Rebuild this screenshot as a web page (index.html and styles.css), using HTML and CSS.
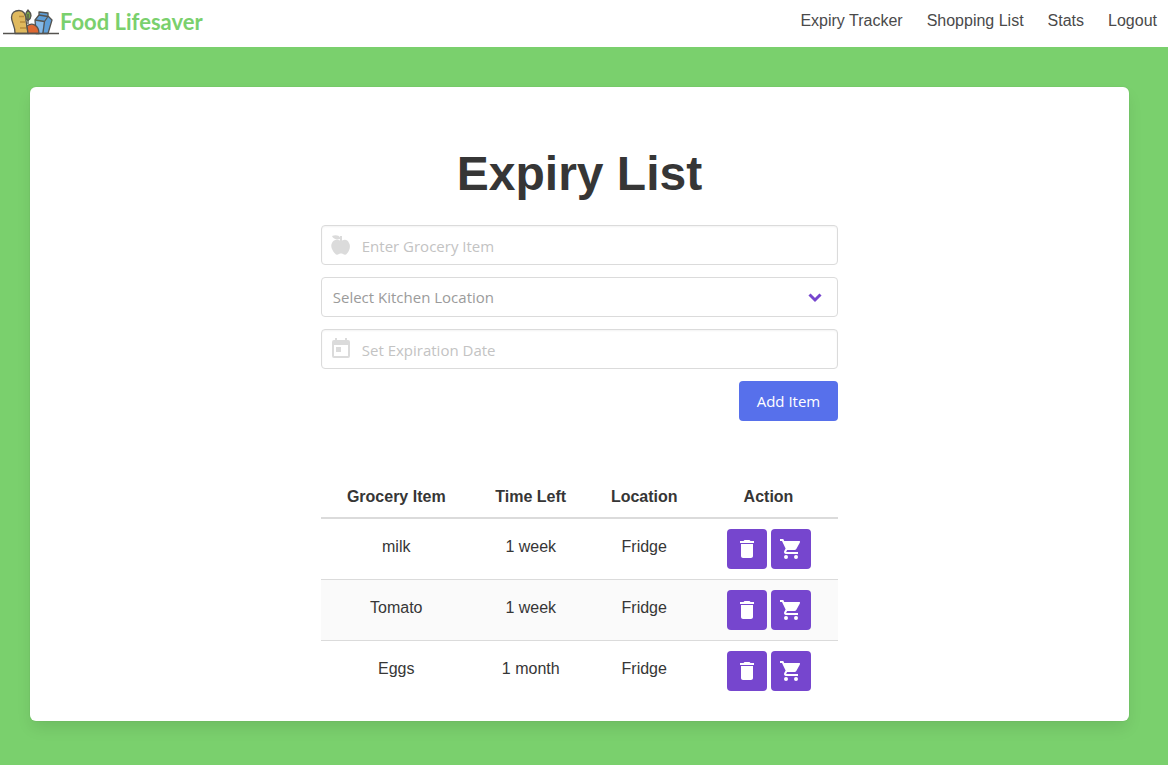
FILE: index.html
```html
<!DOCTYPE html>
<html lang="en">
<head>
<meta charset="utf-8">
<meta name="viewport" content="width=device-width, initial-scale=1">
<title>Food Lifesaver</title>
<link rel="stylesheet" href="styles.css">
</head>
<body>
<svg class="sprite" aria-hidden="true">
  <symbol id="trash" viewBox="0 0 24 24"><path d="M6 19c0 1.100.9 2 2 2h8c1.100 0 2-.9 2-2V7H6v12zM19 4h-3.500l-1-1h-5l-1 1H5v2h14V4z"/></symbol>
  <symbol id="cart" viewBox="0 0 24 24"><path d="M7 18a2 2 0 1 0 0 4 2 2 0 0 0 0-4zM1 2v2h2l3.600 7.590-1.350 2.450C4.520 15.370 5.480 17 7 17h12v-2H7.420a.25.25 0 0 1-.25-.25l.03-.12.9-1.630h7.450c.75 0 1.410-.41 1.750-1.030l3.580-6.490A1 1 0 0 0 20 4H5.210l-.94-2H1zm16 16a2 2 0 1 0 0 4 2 2 0 0 0 0-4z"/></symbol>
</svg>
<header class="navbar">
  <a class="brand" href="#">
    <svg class="brand-icon" viewBox="0 0 58 28" aria-hidden="true">
      <g stroke="#55534f" stroke-width="1.300" stroke-linejoin="round">
        <path fill="#78a548" d="M26 12.500c-4-3-3-7 0-10.500 4 4 4 7.500 0 10.500z"/>
        <path fill="none" d="M26 6v10"/>
        <path fill="#5f9fd8" d="M33 12l4-5V4l9 1v3l4 4-4 13.500H34z"/>
        <path fill="#84b9e8" stroke="none" d="M34 12.500l8 1-2 11.500h-5z"/>
        <path fill="none" d="M37 7l9 1.500M33 12l9.500 1.500L46 8.500M42.500 13.500L41 25"/>
        <path fill="#dfb95e" d="M13 25.500C13.500 18 9.500 15 9.500 9.500 9.500 5 12.500 2.500 17 2.500c6 0 7 4.500 7 10l2 13z"/>
        <path fill="none" stroke="#b98c3d" d="M17 8.500h5M18 14h5M18 20h6"/>
        <path fill="#dd6832" d="M26 25.500L25 18c5-4 12-1 12 7.500z"/>
        <path fill="none" d="M1 25.500h56"/>
      </g>
    </svg>
    <span class="brand-name">Food Lifesaver</span>
  </a>
  <nav class="nav-links">
    <a href="#">Expiry Tracker</a>
    <a href="#">Shopping List</a>
    <a href="#">Stats</a>
    <a href="#">Logout</a>
  </nav>
</header>
<main class="page">
  <section class="box">
    <div class="column">
      <h1 class="title">Expiry List</h1>
      <form class="form">
        <div class="control">
          <svg class="field-icon" viewBox="0 0 24 24" aria-hidden="true"><path d="M20 10c2 3 .5 8-2 10.500-1 1.500-2.500 1.500-4 .5-1.500-.6-2.500-.6-4 0-1.500 1-3 1-4-.5C3.500 18 1 13 3 10c1.500-3.500 5-4 8-2.500V6C8 7 4 6 3 3c3-1.500 7-1 8 1.500V3h2v4.500C16 6 18.500 6.500 20 10z"/></svg>
          <input class="input" type="text" placeholder="Enter Grocery Item" aria-label="Grocery item">
        </div>
        <div class="control">
          <select class="input select" aria-label="Kitchen location">
            <option>Select Kitchen Location</option>
            <option>Fridge</option>
          </select>
          <svg class="chevron" viewBox="0 0 24 24" aria-hidden="true"><path d="M6.500 9.500l5.500 5.500 5.500-5.500"/></svg>
        </div>
        <div class="control">
          <svg class="field-icon" viewBox="0 0 24 24" aria-hidden="true"><path d="M7 10h5v5H7zM19 19H5V8h14m0-5h-1V1h-2v2H8V1H6v2H5a2 2 0 0 0-2 2v14a2 2 0 0 0 2 2h14a2 2 0 0 0 2-2V5a2 2 0 0 0-2-2z"/></svg>
          <input class="input" type="text" placeholder="Set Expiration Date" aria-label="Expiration date">
        </div>
        <button class="submit" type="button">Add Item</button>
      </form>
      <table class="table">
        <thead>
          <tr><th class="col-item">Grocery Item</th><th class="col-time">Time Left</th><th class="col-place">Location</th><th>Action</th></tr>
        </thead>
        <tbody>
          <tr><td>milk</td><td>1 week</td><td>Fridge</td><td class="actions"><div class="buttons"><button class="action" type="button" aria-label="Delete milk"><svg><use href="#trash"/></svg></button><button class="action" type="button" aria-label="Add milk to shopping list"><svg><use href="#cart"/></svg></button></div></td></tr>
          <tr><td>Tomato</td><td>1 week</td><td>Fridge</td><td class="actions"><div class="buttons"><button class="action" type="button" aria-label="Delete Tomato"><svg><use href="#trash"/></svg></button><button class="action" type="button" aria-label="Add Tomato to shopping list"><svg><use href="#cart"/></svg></button></div></td></tr>
          <tr><td>Eggs</td><td>1 month</td><td>Fridge</td><td class="actions"><div class="buttons"><button class="action" type="button" aria-label="Delete Eggs"><svg><use href="#trash"/></svg></button><button class="action" type="button" aria-label="Add Eggs to shopping list"><svg><use href="#cart"/></svg></button></div></td></tr>
        </tbody>
      </table>
    </div>
  </section>
</main>
</body>
</html>
```
FILE: styles.css
```css
* { box-sizing: border-box; }
body {
  margin: 0;
  min-height: 100vh;
  background: #7ad06d;
  color: #363636;
  font: 16px/24px "Liberation Sans", Arial, sans-serif;
}
.sprite { display: none; }
.navbar {
  display: flex;
  justify-content: space-between;
  background: #fff;
  height: 47px;
}
.brand {
  display: flex;
  align-items: center;
  padding: 0 0 3px 2px;
  color: #7ad06d;
  text-decoration: none;
}
.brand-icon { width: 58px; height: 28px; }
.brand-name { font: 700 22px/28px Lato, sans-serif; }
.nav-links {
  display: flex;
  gap: 24px;
  padding: 9px 11px 0 0;
}
.nav-links a { color: #4a4a4a; text-decoration: none; }
.page { padding: 40px 39px 44px 30px; }
.box {
  background: #fff;
  border-radius: 6px;
  padding: 20px;
  box-shadow: 0 8px 16px -2px rgba(10, 10, 10, .1), 0 0 0 1px rgba(10, 10, 10, .02);
}
.column {
  width: calc(50% - 12px);
  min-width: 440px;
  margin: 0 auto;
}
.title {
  margin: 0;
  padding: 40px 0 24px;
  font-size: 48px;
  line-height: 54px;
  text-align: center;
}
.form { display: flex; flex-direction: column; gap: 12px; }
.control { position: relative; }
.input {
  display: block;
  width: 100%;
  height: 40px;
  padding: 1px 11px 0 40px;
  border: 1px solid #dbdbdb;
  border-radius: 4px;
  background: #fff;
  box-shadow: inset 0 1px 2px rgba(10, 10, 10, .05);
  color: #363636;
  font: 15px/24px "Open Sans", sans-serif;
}
.input::placeholder { color: #c3c3c3; opacity: 1; }
.select {
  appearance: none;
  padding: 0 40px 0 11px;
  box-shadow: none;
  color: #9b9b9b;
}
.field-icon {
  position: absolute;
  left: 8px;
  top: 8px;
  width: 24px;
  height: 24px;
  fill: #dbdbdb;
}
.chevron {
  position: absolute;
  right: 11px;
  top: 8px;
  width: 24px;
  height: 24px;
  fill: none;
  stroke: #7646ce;
  stroke-width: 3;
  pointer-events: none;
}
.submit {
  align-self: flex-end;
  height: 40px;
  padding: 0 18px;
  border: 0;
  border-radius: 4px;
  background: #5770eb;
  color: #fff;
  font: 15px/24px "Open Sans", sans-serif;
}
.table {
  width: 100%;
  margin-top: 52px;
  border-collapse: separate;
  border-spacing: 0;
  text-align: center;
}
.table th { padding: 12px 0 8px; border-bottom: 2px solid #dbdbdb; }
.col-item { width: 151px; }
.col-time { width: 118px; }
.col-place { width: 109px; }
.table td {
  padding: 16px 0 0;
  border-bottom: 1px solid #dbdbdb;
  vertical-align: top;
}
.table tr:nth-child(even) td { background: #fafafa; }
.table tr:last-child td { border-bottom: 0; }
.table .actions { padding: 10px 0; }
.buttons { display: flex; justify-content: center; gap: 4px; }
.action {
  display: grid;
  place-items: center;
  width: 40px;
  height: 40px;
  padding: 0;
  border: 0;
  border-radius: 4px;
  background: #7646ce;
}
.action svg { width: 24px; height: 24px; fill: #fff; }
```
